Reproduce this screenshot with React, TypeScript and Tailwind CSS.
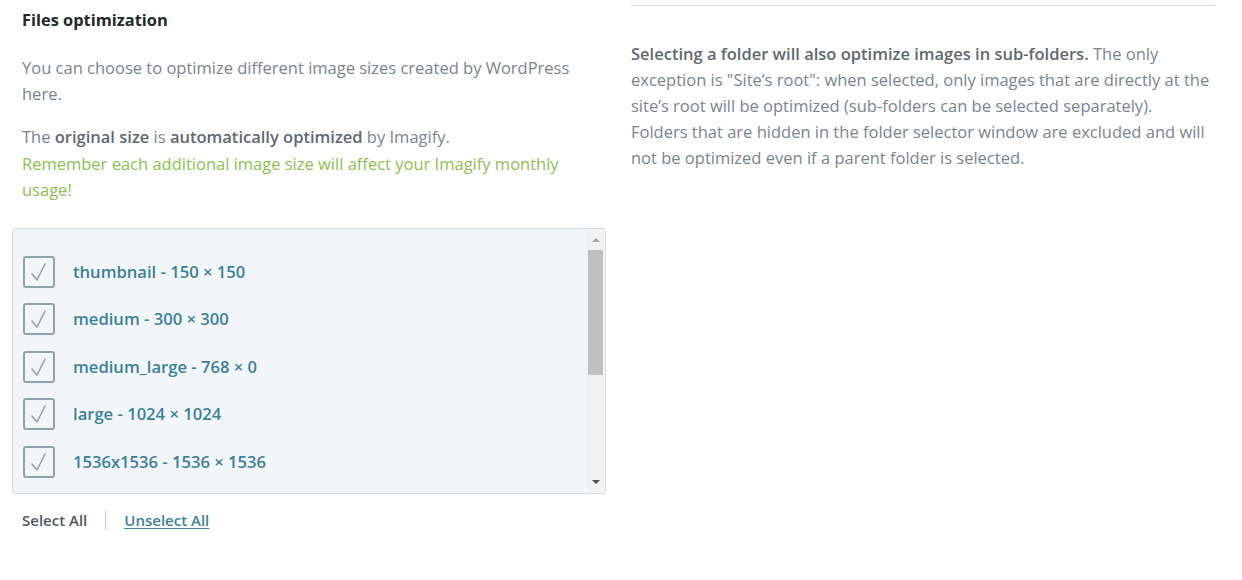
import React, { useState } from 'react';

const sizes = [
  { name: 'thumbnail', dim: '150 × 150' },
  { name: 'medium', dim: '300 × 300' },
  { name: 'medium_large', dim: '768 × 0' },
  { name: 'large', dim: '1024 × 1024' },
  { name: '1536x1536', dim: '1536 × 1536' },
  { name: '2048x2048', dim: '2048 × 2048' },
];

const CheckBox: React.FC<{ checked: boolean }> = ({ checked }) => (
  <span className="w-[32px] h-[32px] shrink-0 rounded-[3px] border-2 border-[#8fa2ae] bg-[#f3f6f8] flex items-center justify-center">
    {checked && (
      <svg width="20" height="22" viewBox="0 0 20 22" fill="none">
        <path d="M3 13 L8 19 L16 3" stroke="#8fa2ae" strokeWidth="1.6" strokeLinecap="round" strokeLinejoin="round" />
      </svg>
    )}
  </span>
);

export default function App() {
  const [checked, setChecked] = useState<boolean[]>(sizes.map(() => true));

  const setAll = (v: boolean) => setChecked(sizes.map(() => v));

  return (
    <div className="w-[1242px] h-[580px] bg-white flex gap-[35px] pl-[22px] pr-[27px] font-['Open_Sans','Noto_Sans',sans-serif] text-[#7a8490]">
      {/* Left column */}
      <div className="w-[584px] shrink-0 pt-[9px] -ml-[10px] pl-[10px]">
        <h3 className="text-[16.4px] font-bold text-[#23282d] leading-[22px]">Files optimization</h3>

        <p className="mt-[24px] text-[16.5px] leading-[26px] pr-[10px]">
          You can choose to optimize different image sizes created by WordPress here.
        </p>

        <p className="mt-[17px] text-[16.5px] leading-[26.5px] pr-[10px]">
          The <strong className="font-semibold text-[#5f6873]">original size</strong> is{' '}
          <strong className="font-semibold text-[#5f6873]">automatically optimized</strong> by Imagify.
          <br />
          <span className="text-[#8cc152]">
            Remember each additional image size will affect your Imagify monthly usage!
          </span>
        </p>

        {/* Size list */}
        <div className="mt-[24px] -ml-[10px] w-[594px] h-[266px] rounded-[3px] border border-[#d5dbe0] bg-[#f3f6f8] flex">
          <div className="flex-1 pt-[27px] pl-[10px] flex flex-col gap-[15.5px] overflow-hidden">
            {sizes.map((s, i) => (
              <label
                key={s.name}
                className="flex items-center gap-[18px] cursor-pointer"
                onClick={() => setChecked((c) => c.map((v, j) => (j === i ? !v : v)))}
              >
                <CheckBox checked={checked[i]} />
                <span className="text-[16.6px] font-semibold text-[#3c8199] leading-[32px]">
                  {s.name} - {s.dim}
                </span>
              </label>
            ))}
          </div>

          {/* Scrollbar */}
          <div className="w-[17px] bg-[#f1f1f1] flex flex-col items-center my-[1px] mr-[1px]">
            <div className="h-[20px] flex items-center justify-center">
              <span className="w-0 h-0 border-x-[4px] border-x-transparent border-b-[4px] border-b-[#a3a3a3]" />
            </div>
            <div className="w-[15px] h-[125px] bg-[#c1c1c1]" />
            <div className="flex-1" />
            <div className="h-[20px] flex items-center justify-center">
              <span className="w-0 h-0 border-x-[4px] border-x-transparent border-t-[4px] border-t-[#505050]" />
            </div>
          </div>
        </div>

        <div className="mt-[14px] flex items-center h-[24px] text-[15px] leading-[24px] font-semibold">
          <span className="text-[#50575f] cursor-pointer" onClick={() => setAll(true)}>
            Select All
          </span>
          <span className="mx-[18px] w-px h-[20px] bg-[#c8ccd0]" />
          <span className="text-[#3c8199] underline underline-offset-2 cursor-pointer" onClick={() => setAll(false)}>
            Unselect All
          </span>
        </div>
      </div>

      {/* Right column */}
      <div className="flex-1 pt-[5px]">
        <div className="border-t border-[#dcdcde]" />
        <p className="mt-[35px] text-[16.5px] leading-[26px]">
          <strong className="font-semibold text-[#5f6873]">
            Selecting a folder will also optimize images in sub-folders.
          </strong>{' '}
          The only exception is "Site’s root": when selected, only images that are directly at the site’s
          root will be optimized (sub-folders can be selected separately).
          <br />
          Folders that are hidden in the folder selector window are excluded and will not be optimized
          even if a parent folder is selected.
        </p>
      </div>
    </div>
  );
}
